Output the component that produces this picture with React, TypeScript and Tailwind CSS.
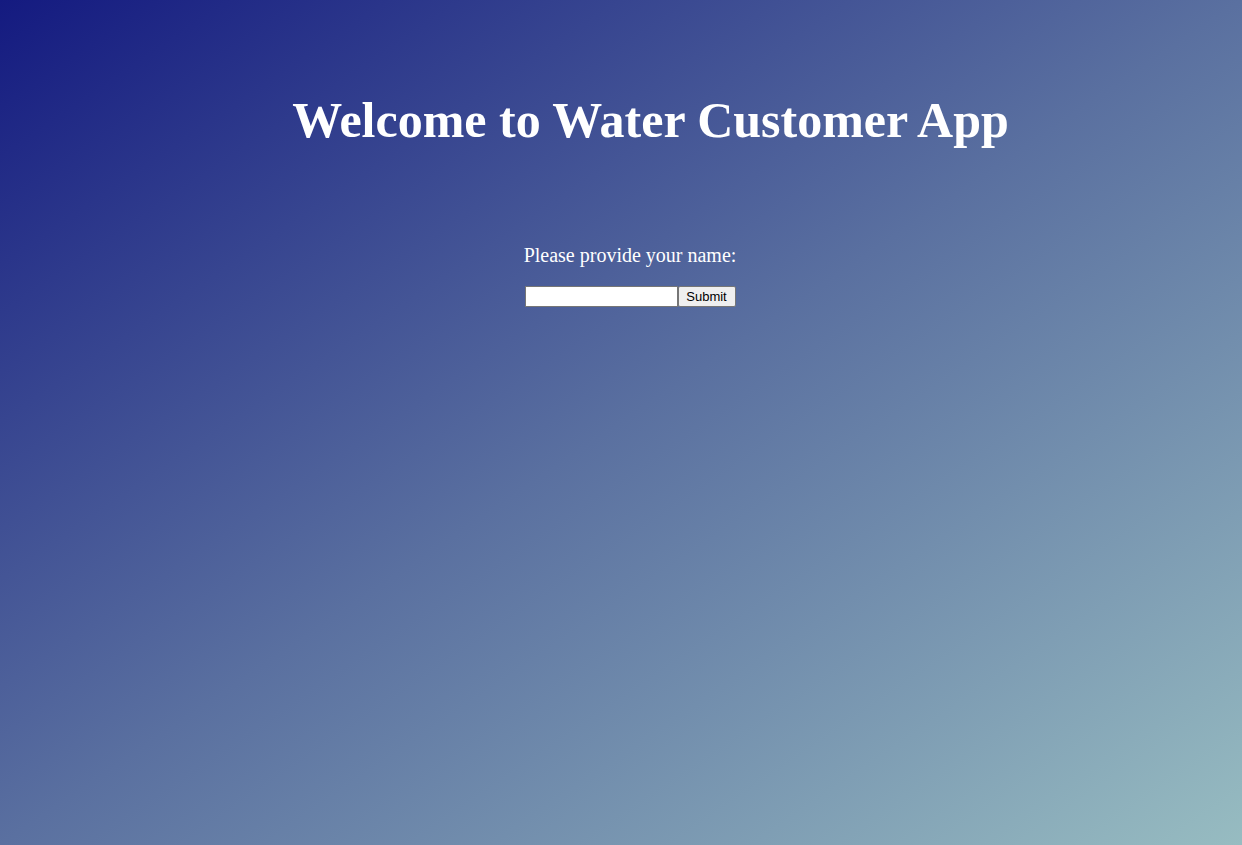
export default function App() {
  return (
    <div className="min-h-[845px] w-full bg-[linear-gradient(to_bottom_right,#141a80,#5a70a0_50%,#97bcc1)] font-['Liberation_Serif',serif] text-white">
      <div className="flex flex-col items-center pl-[59px] pt-[84px]">
        <h1 className="text-[50px] leading-[72px] font-bold">Welcome to Water Customer App</h1>
      </div>
      <div className="mt-[84px] flex flex-col items-center pl-[18px]">
        <p className="text-[20px] leading-[30px]">Please provide your name:</p>
        <form className="mt-[16px] flex" onSubmit={(e) => e.preventDefault()}>
          <input
            type="text"
            className="h-[21px] w-[153px] border border-[#767676] bg-white px-1 font-['Liberation_Sans',sans-serif] text-[13px] text-black outline-none"
          />
          <button
            type="submit"
            className="h-[21px] w-[58px] rounded-[2px] border border-[#767676] bg-[#efefef] font-['Liberation_Sans',sans-serif] text-[13px] text-black"
          >
            Submit
          </button>
        </form>
      </div>
    </div>
  )
}
